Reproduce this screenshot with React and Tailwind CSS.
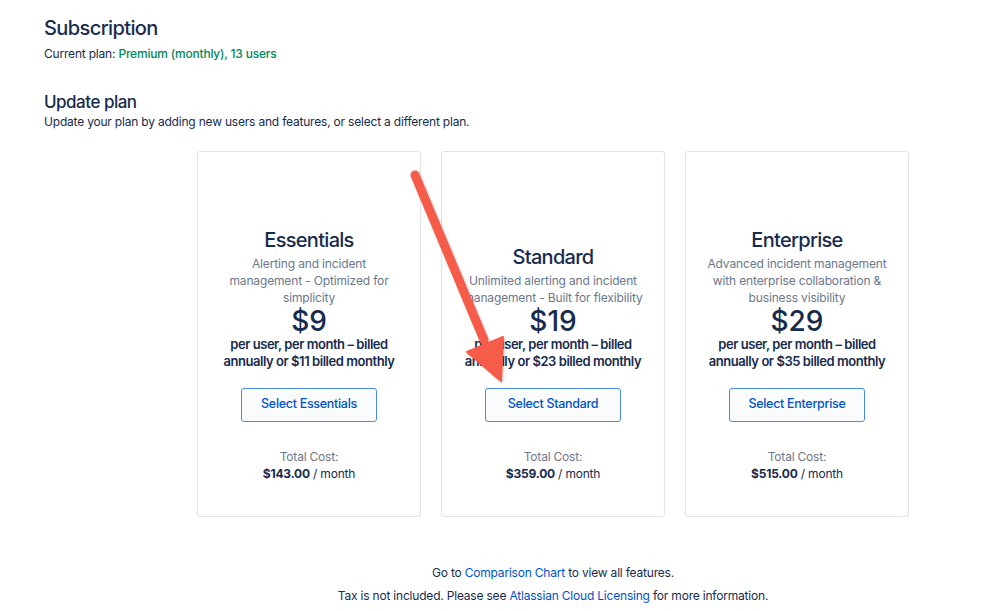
import { useState } from "react"

const plans = [
  {
    name: "Essentials",
    description: "Alerting and incident management - Optimized for simplicity",
    price: "$9",
    monthly: "$11",
    total: "$143.00",
  },
  {
    name: "Standard",
    description: "Unlimited alerting and incident management - Built for flexibility",
    price: "$19",
    monthly: "$23",
    total: "$359.00",
  },
  {
    name: "Enterprise",
    description: "Advanced incident management with enterprise collaboration & business visibility",
    price: "$29",
    monthly: "$35",
    total: "$515.00",
  },
]

const PlanCard = ({ plan, onSelect }) => (
  <div className="w-[224px] h-[366px] border border-[#e1e3e8] rounded-[3px] flex flex-col items-center text-center">
    <div className="h-[154px] w-full flex flex-col justify-end items-center px-[19px]">
      <h3 className="text-[20px] leading-[24px] font-medium tracking-[-0.7px] text-[#172b4d]">{plan.name}</h3>
      <p className="mt-[3px] text-[12px] leading-[17px] tracking-[-0.15px] text-[#6b778c]">{plan.description}</p>
    </div>
    <div className="text-[28px] leading-[30px] font-medium text-[#172b4d]">{plan.price}</div>
    <p className="px-[20px] text-[13px] leading-[17px] font-semibold tracking-[-0.45px] text-[#172b4d]">
      {`per user, per month – billed annually or ${plan.monthly} billed monthly`}
    </p>
    <button
      onClick={() => onSelect(plan.name)}
      className="mt-[18px] w-[136px] h-[34px] rounded-[3px] border border-[#4c8ae8] bg-[#fafbfd] text-[12.5px] font-medium tracking-[-0.3px] text-[#0052cc]"
    >
      {`Select ${plan.name}`}
    </button>
    <div className="mt-[26px] text-[12px] leading-[17px] tracking-[-0.2px] text-[#6b778c]">Total Cost:</div>
    <div className="text-[12px] leading-[17px] tracking-[-0.2px] text-[#172b4d]">
      <span className="font-bold">{plan.total}</span> / month
    </div>
  </div>
)

export default function App() {
  const [selected, setSelected] = useState(null)

  return (
    <div
      className="relative w-[999px] h-[611px] bg-white overflow-hidden text-[#172b4d]"
      style={{ fontFamily: "Inter, 'Noto Sans', sans-serif" }}
    >
      <div className="px-[44px] pt-[15px]">
        <h1 className="text-[20px] leading-[26px] font-medium tracking-[-0.6px]">Subscription</h1>
        <p className="mt-[3.5px] text-[12px] leading-[17px] tracking-[-0.2px]">
          Current plan: <span className="font-medium text-[#00875a]">Premium (monthly), 13 users</span>
        </p>

        <h2 className="mt-[29.5px] text-[17px] leading-[22px] font-medium tracking-[-0.5px]">Update plan</h2>
        <p className="text-[12px] leading-[17px] tracking-[-0.2px]">
          Update your plan by adding new users and features, or select a different plan.
        </p>

        <div className="ml-[153px] mt-[20.5px] w-[712px]">
          <div className="flex gap-[20px]">
            {plans.map((plan) => (
              <PlanCard key={plan.name} plan={plan} onSelect={setSelected} />
            ))}
          </div>

          <div className="mt-[44.5px] text-center text-[12px] leading-[23px] tracking-[-0.2px]">
            <p>
              Go to <a className="text-[#0052cc]">Comparison Chart</a> to view all features.
            </p>
            <p>
              Tax is not included. Please see <a className="text-[#0052cc]">Atlassian Cloud Licensing</a> for more
              information.
            </p>
          </div>
          {selected && <span className="sr-only">{selected}</span>}
        </div>
      </div>

      <svg className="absolute left-0 top-0 pointer-events-none" width="999" height="611">
        <defs>
          <filter id="shadow" x="-20%" y="-20%" width="140%" height="140%">
            <feDropShadow dx="1" dy="1" stdDeviation="1.2" floodColor="#000" floodOpacity="0.25" />
          </filter>
        </defs>
        <g filter="url(#shadow)" fill="#f55b4a" stroke="#f55b4a">
          <line x1="415" y1="175" x2="484" y2="340" strokeWidth="9" strokeLinecap="round" />
          <polygon points="501,381 467,352 503,337" strokeWidth="2" strokeLinejoin="round" />
        </g>
      </svg>
    </div>
  )
}
